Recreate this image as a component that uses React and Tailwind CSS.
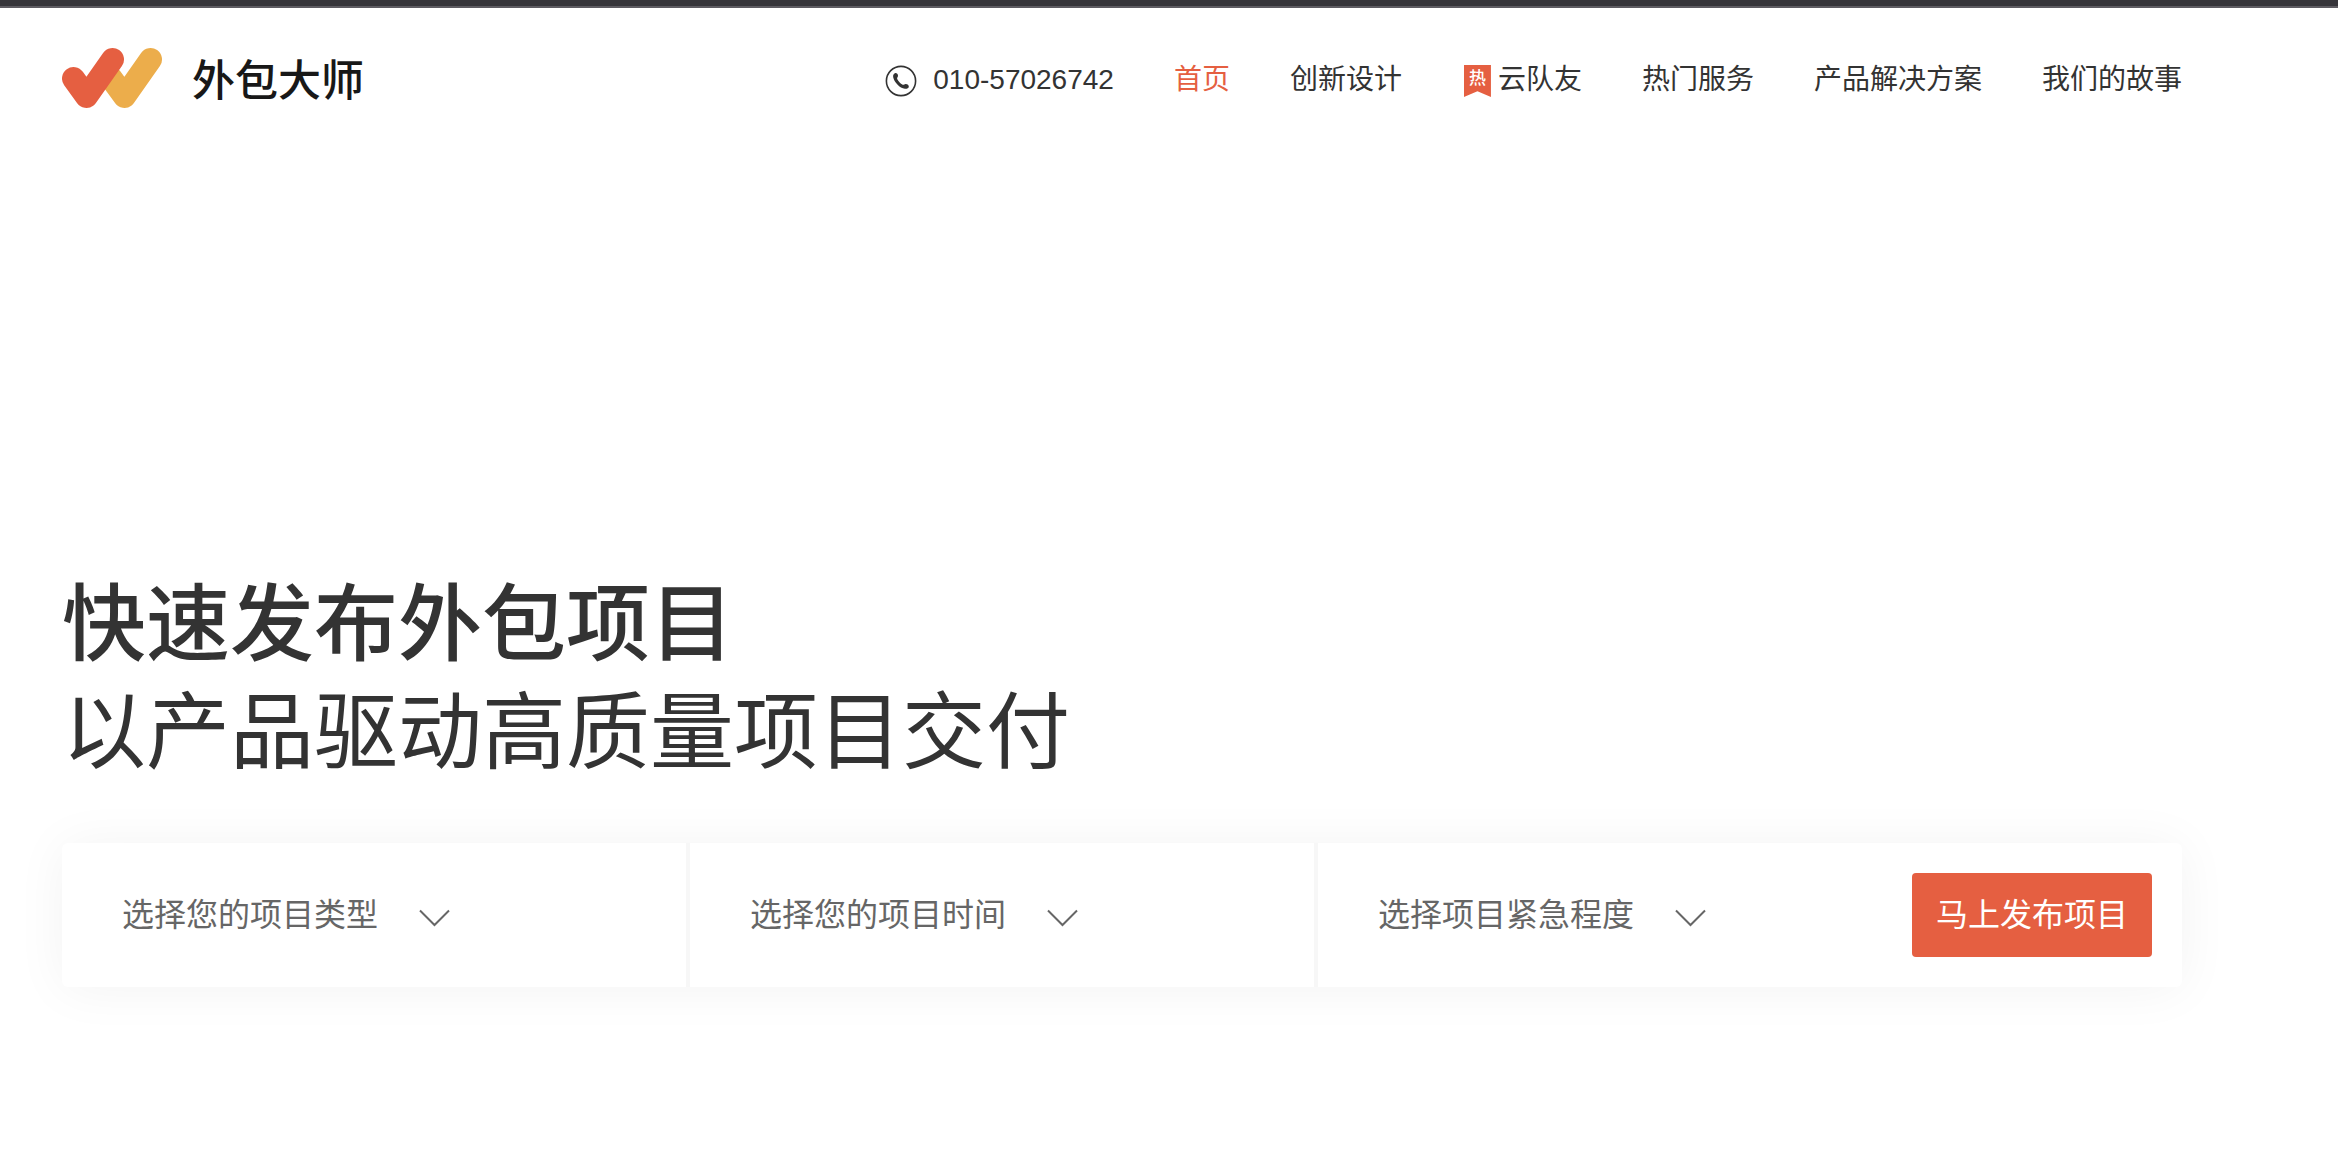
import React from "react";

const links = [
  { label: "首页", active: true },
  { label: "创新设计" },
  { label: "云队友", hot: true },
  { label: "热门服务" },
  { label: "产品解决方案" },
  { label: "我们的故事" },
];

const fields = [
  { id: "type", text: "选择您的项目类型" },
  { id: "time", text: "选择您的项目时间" },
  { id: "urgency", text: "选择项目紧急程度" },
];

function Logo() {
  return (
    <svg className="h-[66px] w-[102px]" viewBox="1 0 102 66" fill="none" strokeWidth="23" strokeLinecap="round" strokeLinejoin="round" aria-hidden="true">
      <path d="M50 31 63.500 49.500 89.500 12.500" stroke="#ecad4b" />
      <path d="M12.500 31.500 25.500 49.500 51.500 12.500" stroke="#e55f41" />
    </svg>
  );
}

function PhoneIcon() {
  return (
    <svg className="mt-0.5 size-8" viewBox="0 0 32 32" fill="none" aria-hidden="true">
      <circle cx="16" cy="16" r="14.600" stroke="#333" strokeWidth="1.600" />
      <path d="M8.200 12.200C7.800 10.200 8.600 8.600 10 8.200C11.500 7.800 12.900 9 13 10.600C13.100 11.900 12 12.700 12.100 13.600C12.300 15.300 15.900 19.200 17.700 19.700C18.700 20 19.500 19.100 20.600 19C22.300 18.900 24 20.100 23.800 21.700C23.600 23.300 21.800 24 19.900 23.800C14.800 23.200 9 16.900 8.200 12.200Z" fill="#333" />
    </svg>
  );
}

function HotBadge() {
  return (
    <span className="mt-0.5 mr-[7px] ml-0.5 flex h-8 w-[27px] justify-center bg-[#e55f41] pt-1 text-[17px] leading-5 font-medium text-white [clip-path:polygon(0_0,100%_0,100%_100%,50%_82%,0_100%)]">
      热
    </span>
  );
}

function Field({ id, text }) {
  return (
    <div className="relative flex items-center">
      <select id={id} aria-label={text} defaultValue="" className="field-sizing-content cursor-pointer appearance-none bg-transparent pr-[72px] text-[32px] leading-[48px] text-[#666] outline-none">
        <option value="">{text}</option>
      </select>
      <svg className="pointer-events-none absolute right-0 mt-1.5 h-[18px] w-[31px]" viewBox="0 0 31 18" fill="none" stroke="#666" strokeWidth="2" aria-hidden="true">
        <path d="M1 1.500 15.500 16 30 1.500" />
      </svg>
    </div>
  );
}

export default function App() {
  return (
    <div className="min-h-screen bg-white font-['Liberation_Sans','Noto_Sans_CJK_SC',sans-serif] text-[#333]">
      <div className="h-2 border-b-2 border-[#5e5c62] bg-[#36353a]" />
      <div className="pr-[156px] pl-[62px]">
        <header className="flex h-36 items-center justify-between">
          <a href="#" className="flex items-center gap-7 text-[#181818]">
            <Logo />
            <span className="pt-0.5 text-[43px] leading-[60px] font-medium">外包大师</span>
          </a>
          <nav className="flex items-center gap-[60px] text-[28px] leading-10 whitespace-nowrap">
            <a href="tel:010-57026742" className="flex items-center gap-4">
              <PhoneIcon />
              010-57026742
            </a>
            {links.map((l) => (
              <a key={l.label} href="#" className={l.active ? "flex items-center text-[#e55f41]" : "flex items-center"}>
                {l.hot && <HotBadge />}
                {l.label}
              </a>
            ))}
          </nav>
        </header>
        <main className="pt-[419px]">
          <h1 className="text-[84px] leading-[108px] font-medium">快速发布外包项目</h1>
          <p className="text-[84px] leading-[108px]">以产品驱动高质量项目交付</p>
          <form className="mt-14 grid h-36 grid-cols-[628fr_628fr_864fr] rounded-md bg-white shadow-[0_2px_52px_rgba(0,0,0,0.05)]" onSubmit={(e) => e.preventDefault()}>
            <div className="flex border-r-4 border-[#f7f7f7] pl-[60px]">
              <Field {...fields[0]} />
            </div>
            <div className="flex border-r-4 border-[#f7f7f7] pl-[60px]">
              <Field {...fields[1]} />
            </div>
            <div className="flex items-center justify-between pr-[30px] pl-[60px]">
              <Field {...fields[2]} />
              <button type="submit" className="h-[84px] rounded bg-[#e55f41] px-6 text-[32px] leading-[48px] text-white">
                马上发布项目
              </button>
            </div>
          </form>
        </main>
      </div>
    </div>
  );
}
